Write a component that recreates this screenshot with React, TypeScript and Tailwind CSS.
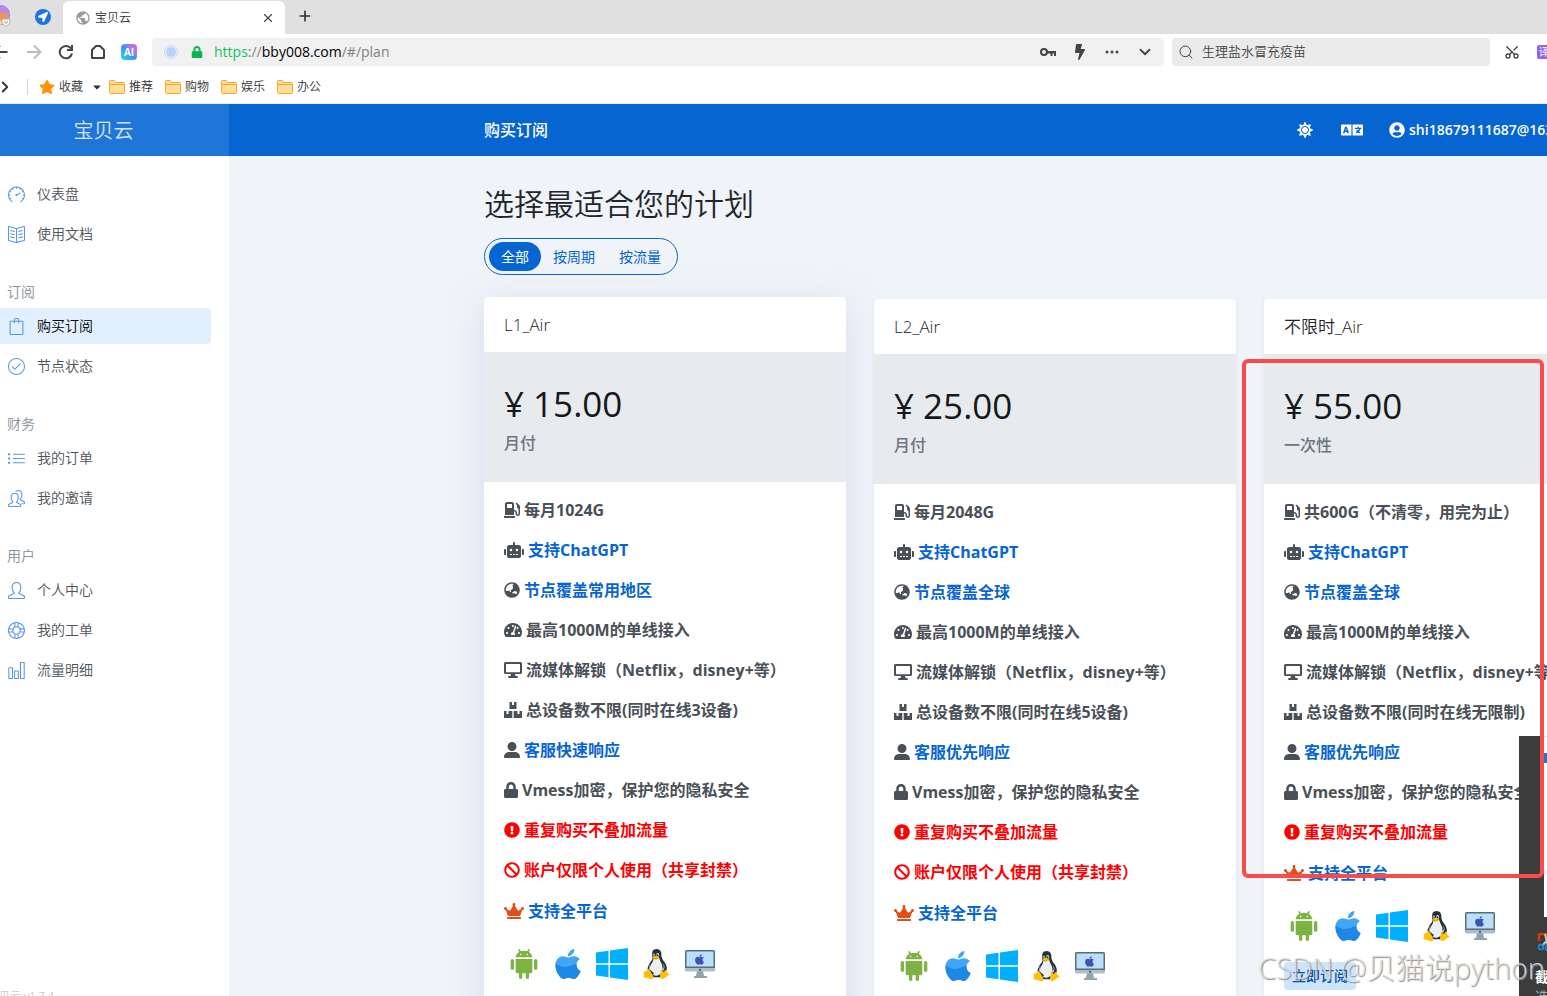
import { useId, useState } from 'react';
import type { ReactNode } from 'react';
import type { IconType } from 'react-icons';
import {
    FaBan,
    FaBolt,
    FaCaretDown,
    FaCrown,
    FaExclamationCircle,
    FaGasPump,
    FaGlobeAsia,
    FaLanguage,
    FaLocationArrow,
    FaLock,
    FaRobot,
    FaStar,
    FaSun,
    FaTachometerAlt,
    FaUserCircle,
} from 'react-icons/fa';
import { FaUserLarge } from 'react-icons/fa6';
import { FcAndroidOs, FcLinux } from 'react-icons/fc';
import { MdPublic } from 'react-icons/md';
import {
    SlBag,
    SlBookOpen,
    SlChart,
    SlCheck,
    SlList,
    SlPeople,
    SlSpeedometer,
    SlSupport,
    SlUser,
} from 'react-icons/sl';
import { ChevronDown, ChevronRight, Plus, Scissors, Search, X } from 'lucide-react';

type Tone = 'dark' | 'link' | 'danger';

interface Feature {
    icon: ReactNode;
    text: string;
    tone?: Tone;
}

interface Plan {
    name: string;
    price: string;
    period: string;
    features: Feature[];
    raised?: boolean;
}

const APPLE_PATH =
    'M318.7 268.7c-.2-36.7 16.4-64.4 50-84.8-18.8-26.9-47.2-41.7-84.7-44.6-35.5-2.8-74.3 20.7-88.5 20.7-15 0-49.4-19.7-76.4-19.7C63.3 141.2 4 184.8 4 273.5q0 39.3 14.4 81.2c12.8 36.7 59 126.7 107.2 125.2 25.2-.6 43-17.9 75.8-17.9 31.8 0 48.3 17.9 76.4 17.9 48.6-.7 90.4-82.5 102.6-119.3-65.2-30.7-61.7-90-61.7-91.9zm-56.6-164.2c27.3-32.4 24.8-61.9 24-72.5-24.1 1.4-52 16.4-67.9 34.9-17.5 19.8-27.8 44.3-25.6 71.9 26.1 2 49.9-11.4 69.5-34.3z';

function AppleLogo() {
    const id = useId();
    return (
        <svg viewBox="0 0 384 448" className="h-[30px] w-[26px]" aria-hidden="true">
            <clipPath id={id}>
                <path d="M0 215C60 240 110 285 190 262S310 205 384 225V448H0z" />
            </clipPath>
            <g transform="translate(0 -32)">
                <path fill="#42a5f5" d={APPLE_PATH} />
            </g>
            <g clipPath={`url(#${id})`}>
                <path fill="#1e88e5" d={APPLE_PATH} transform="translate(0 -32)" />
            </g>
        </svg>
    );
}

function WindowsLogo() {
    return (
        <svg viewBox="0 0 32 32" className="size-8" fill="#00b0ff" aria-hidden="true">
            <path d="M0 4.500 12.500 2.700v12.500H0zM14 2.500 32 0v15.200H14zM0 16.800h12.500v12.500L0 27.500zM14 16.800h18V32l-18-2.500z" />
        </svg>
    );
}

function MacDesktop() {
    return (
        <svg viewBox="0 0 30 29" className="h-[29px] w-[30px]" aria-hidden="true">
            <path fill="#90a4ae" d="M12 21h6l1 5h2.500q.5 0 .5.5V28H9v-1.500q0-.5.5-.5H11z" />
            <path fill="#b0bec5" d="M0 17h30v3q0 1.500-1.500 1.500h-27Q0 21.500 0 20z" />
            <path fill="#546e7a" d="M1.500 0h27Q30 0 30 1.500V18H0V1.500Q0 0 1.500 0z" />
            <path fill="#bbdefb" d="M1.500 1.500h27v15h-27z" />
            <circle cx="15" cy="19.800" r="1" fill="#37474f" />
            <path fill="#3f51b5" d={APPLE_PATH} transform="translate(10 3.500) scale(.0235)" />
        </svg>
    );
}

function DesktopIcon() {
    return (
        <svg viewBox="0 0 18 16" className="h-4 w-[18px]" fill="currentColor" aria-hidden="true">
            <path
                fillRule="evenodd"
                d="M1.500 0h15Q18 0 18 1.500v9q0 1.500-1.500 1.500H11l.5 2H13q.8 0 .8.8V16H4.200v-1.200q0-.8.8-.8h1.500l.5-2H1.500Q0 12 0 10.500v-9Q0 0 1.500 0zM2 2v8.200h14V2z"
            />
        </svg>
    );
}

function BoxesIcon() {
    return (
        <svg viewBox="0 0 18 16" className="h-4 w-[18px]" fill="currentColor" aria-hidden="true">
            <path d="M5.500 0H8v3h2V0h2.500v7h-7zM0 9h2.500v3h2V9h3.800v7H0zM9.700 9h3.800v3h2V9H18v7H9.700z" />
        </svg>
    );
}

const fuel = <FaGasPump className="size-4" />;
const robot = <FaRobot className="size-5" />;
const globe = <FaGlobeAsia className="size-4" />;
const gauge = <FaTachometerAlt className="size-[18px]" />;
const person = <FaUserLarge className="size-4" />;
const lock = <FaLock className="h-4 w-3.5" />;
const warning = <FaExclamationCircle className="size-4" />;
const ban = <FaBan className="size-4" />;
const crown = <FaCrown className="size-5 text-[#e04f1a]" />;

const plans: Plan[] = [
    {
        name: 'L1_Air',
        price: '¥ 15.00',
        period: '月付',
        raised: true,
        features: [
            { icon: fuel, text: '每月1024G' },
            { icon: robot, text: '支持ChatGPT', tone: 'link' },
            { icon: globe, text: '节点覆盖常用地区', tone: 'link' },
            { icon: gauge, text: '最高1000M的单线接入' },
            { icon: <DesktopIcon />, text: '流媒体解锁（Netflix，disney+等）' },
            { icon: <BoxesIcon />, text: '总设备数不限(同时在线3设备)' },
            { icon: person, text: '客服快速响应', tone: 'link' },
            { icon: lock, text: 'Vmess加密，保护您的隐私安全' },
            { icon: warning, text: '重复购买不叠加流量', tone: 'danger' },
            { icon: ban, text: '账户仅限个人使用（共享封禁）', tone: 'danger' },
            { icon: crown, text: '支持全平台', tone: 'link' },
        ],
    },
    {
        name: 'L2_Air',
        price: '¥ 25.00',
        period: '月付',
        features: [
            { icon: fuel, text: '每月2048G' },
            { icon: robot, text: '支持ChatGPT', tone: 'link' },
            { icon: globe, text: '节点覆盖全球', tone: 'link' },
            { icon: gauge, text: '最高1000M的单线接入' },
            { icon: <DesktopIcon />, text: '流媒体解锁（Netflix，disney+等）' },
            { icon: <BoxesIcon />, text: '总设备数不限(同时在线5设备)' },
            { icon: person, text: '客服优先响应', tone: 'link' },
            { icon: lock, text: 'Vmess加密，保护您的隐私安全' },
            { icon: warning, text: '重复购买不叠加流量', tone: 'danger' },
            { icon: ban, text: '账户仅限个人使用（共享封禁）', tone: 'danger' },
            { icon: crown, text: '支持全平台', tone: 'link' },
        ],
    },
    {
        name: '不限时_Air',
        price: '¥ 55.00',
        period: '一次性',
        features: [
            { icon: fuel, text: '共600G（不清零，用完为止）' },
            { icon: robot, text: '支持ChatGPT', tone: 'link' },
            { icon: globe, text: '节点覆盖全球', tone: 'link' },
            { icon: gauge, text: '最高1000M的单线接入' },
            { icon: <DesktopIcon />, text: '流媒体解锁（Netflix，disney+等）' },
            { icon: <BoxesIcon />, text: '总设备数不限(同时在线无限制)' },
            { icon: person, text: '客服优先响应', tone: 'link' },
            { icon: lock, text: 'Vmess加密，保护您的隐私安全' },
            { icon: warning, text: '重复购买不叠加流量', tone: 'danger' },
            { icon: crown, text: '支持全平台', tone: 'link' },
        ],
    },
];

const textTones: Record<Tone, string> = {
    dark: 'text-[#495057]',
    link: 'text-[#0665d0]',
    danger: 'text-[#ff0000]',
};

const iconTones: Record<Tone, string> = {
    dark: 'text-[#495057]',
    link: 'text-[#495057]',
    danger: 'text-[#ff0000]',
};

function PlanCard({ plan }: { plan: Plan }) {
    return (
        <article
            className={
                plan.raised
                    ? 'w-[362px] shrink-0 -translate-y-0.5 rounded-sm bg-white shadow-[0_8px_32px_rgba(190,200,232,0.55)]'
                    : 'w-[362px] shrink-0 rounded-sm bg-white shadow-[0_1px_3px_rgba(200,208,235,0.5)]'
            }
        >
            <h2 className="flex h-[55px] items-center px-5 text-[17px] font-[350] text-[#212529]">{plan.name}</h2>
            <div className="h-[130px] bg-[#e8ebee] px-5 pt-7">
                <div className="text-[35px] leading-12 font-medium text-[#16181a]">{plan.price}</div>
                <div className="mt-[3px] text-base leading-6 font-medium text-[#6c757d]">{plan.period}</div>
            </div>
            <div className="px-5 pt-4 pb-6">
                <ul className="flex flex-col gap-4">
                    {plan.features.map((feature) => (
                        <li
                            key={feature.text}
                            className="flex h-6 items-center gap-1 text-base leading-6 font-bold whitespace-nowrap last:h-[26px]"
                        >
                            <span className={iconTones[feature.tone ?? 'dark']}>{feature.icon}</span>
                            <span className={textTones[feature.tone ?? 'dark']}>{feature.text}</span>
                        </li>
                    ))}
                </ul>
                <div className="mt-5 flex h-10 items-center gap-1">
                    <span className="flex w-10 justify-center"><FcAndroidOs className="size-10" /></span>
                    <span className="flex w-10 justify-center"><AppleLogo /></span>
                    <span className="flex w-10 justify-center"><WindowsLogo /></span>
                    <span className="flex w-10 justify-center"><FcLinux className="size-10" /></span>
                    <span className="flex w-10 justify-center"><MacDesktop /></span>
                </div>
                <button
                    type="button"
                    className="mt-4 h-7 rounded-sm bg-[#cde4fe] px-2 text-sm font-medium text-[#054d9e]"
                >
                    立即订阅
                </button>
            </div>
        </article>
    );
}

interface NavEntry {
    label: string;
    icon: IconType;
    active?: boolean;
}

const navGroups: { title?: string; items: NavEntry[] }[] = [
    {
        items: [
            { label: '仪表盘', icon: SlSpeedometer },
            { label: '使用文档', icon: SlBookOpen },
        ],
    },
    {
        title: '订阅',
        items: [
            { label: '购买订阅', icon: SlBag, active: true },
            { label: '节点状态', icon: SlCheck },
        ],
    },
    {
        title: '财务',
        items: [
            { label: '我的订单', icon: SlList },
            { label: '我的邀请', icon: SlPeople },
        ],
    },
    {
        title: '用户',
        items: [
            { label: '个人中心', icon: SlUser },
            { label: '我的工单', icon: SlSupport },
            { label: '流量明细', icon: SlChart },
        ],
    },
];

function Sidebar() {
    return (
        <aside className="flex w-[229px] shrink-0 flex-col overflow-hidden bg-white">
            <div className="flex h-13 shrink-0 items-center justify-center bg-[#1f75d8] pt-0.5 pr-[22px] text-xl font-[350] text-white/80">
                宝贝云
            </div>
            <nav className="pt-5 pr-[18px]">
                {navGroups.map((group, i) => (
                    <div key={i}>
                        {group.title && (
                            <div className="h-13 pt-[26px] pl-[7px] text-sm leading-5 font-[350] text-[#869099]">
                                {group.title}
                            </div>
                        )}
                        {group.items.map(({ label, icon: Icon, active }) => (
                            <a
                                key={label}
                                href="#/"
                                className={
                                    active
                                        ? 'mb-1 flex h-9 items-center gap-3 rounded-r-sm bg-[#e1effe] pl-2 text-sm font-[350] text-black'
                                        : 'mb-1 flex h-9 items-center gap-3 pl-2 text-sm font-[350] text-[#4d535c]'
                                }
                            >
                                <Icon className="size-[17px] text-[#5598e6]" />
                                {label}
                            </a>
                        ))}
                    </div>
                ))}
            </nav>
            <div className="mt-auto -mb-2 -ml-3 shrink-0 self-start text-[11px] leading-4 text-[#c9cccf]">宝贝云 v1.7.4</div>
        </aside>
    );
}

function FolderIcon() {
    return (
        <svg viewBox="0 0 16 14" className="h-3.5 w-4" aria-hidden="true">
            <path d="M.5 12.500V1.500q0-1 1-1h3.800l1.200 2h8q1 0 1 1v9q0 1-1 1h-13q-1 0-1-1z" fill="#ffdf99" stroke="#f5a623" />
            <path d="M1 4.500h14" stroke="#f5a623" />
        </svg>
    );
}

const toolButton = 'flex shrink-0 items-center justify-center text-[#444]';

function BrowserChrome() {
    return (
        <header className="shrink-0 overflow-hidden border-b border-[#ececec] bg-white font-[350] text-[#333]">
            <div className="flex h-[34px] items-end bg-[#e0e0e0]">
                <button type="button" aria-label="账号" className="mb-1.5 -ml-3 size-6 shrink-0">
                    <svg viewBox="0 0 24 24" className="size-6">
                        <circle cx="12" cy="11" r="11" fill="#b68ae6" stroke="#f4f1f8" />
                        <path d="M4 18c1-8 6-9 9-10l3 2 3-2 1 6-4 5z" fill="#f0964a" />
                        <path d="M6 18q6-4 10 1-5 4-10-1z" fill="#fbe08a" />
                        <path d="M14 15h8v4l-4 3.500-4-3.500z" fill="#fff" stroke="#aaa" />
                        <path d="m16 17 2 2.500 2-2.500" fill="none" stroke="#999" />
                    </svg>
                </button>
                <button type="button" aria-label="导航" className="mb-[9px] ml-[23px] flex size-4 shrink-0 items-center justify-center rounded-full bg-[#1a73e8] text-white">
                    <FaLocationArrow className="size-2.5" />
                </button>
                <div className="ml-3 flex h-[33px] w-[222px] shrink-0 items-center rounded-t-md bg-white pr-2.5 pl-3">
                    <MdPublic className="size-4 text-[#9a9a9a]" />
                    <span className="ml-1 text-xs">宝贝云</span>
                    <button type="button" aria-label="关闭标签页" className="ml-auto text-[#444]">
                        <X className="size-3.5" />
                    </button>
                </div>
                <button type="button" aria-label="新标签页" className="mb-0.5 ml-3 h-8 text-[#333]">
                    <Plus className="size-4" strokeWidth={2.500} />
                </button>
            </div>
            <div className="flex h-9 items-center">
                <button type="button" aria-label="后退" className={`${toolButton} -ml-2`}>
                    <svg viewBox="0 0 16 16" className="size-4" fill="none" stroke="currentColor" strokeWidth="2">
                        <path d="M15.500 8H2M8 1.500 1.500 8 8 14.500" />
                    </svg>
                </button>
                <button type="button" aria-label="前进" className="ml-[18px] shrink-0 text-[#bbb]">
                    <svg viewBox="0 0 16 16" className="size-4" fill="none" stroke="currentColor" strokeWidth="2">
                        <path d="M1 8h13M8 1.500 14.500 8 8 14.500" />
                    </svg>
                </button>
                <button type="button" aria-label="刷新" className={`${toolButton} ml-4`}>
                    <svg viewBox="0 0 16 16" className="size-4" fill="none" stroke="currentColor" strokeWidth="2">
                        <path d="M14 9.500A6.200 6.200 0 1 1 13 4.500M14 1v5H9" />
                    </svg>
                </button>
                <button type="button" aria-label="主页" className={`${toolButton} ml-4`}>
                    <svg viewBox="0 0 16 16" className="size-4" fill="none" stroke="currentColor" strokeWidth="2">
                        <path d="M2 14V6L6 2h4l4 4v8z" strokeLinejoin="round" />
                    </svg>
                </button>
                <button
                    type="button"
                    className="ml-[15px] flex size-4 shrink-0 items-center justify-center rounded-sm bg-linear-to-bl from-[#ff3fb4] via-[#3f8cff] to-[#12e0e0] text-[10px] leading-4 font-bold text-white"
                >
                    AI
                </button>
                <div className="ml-[15px] flex h-7 min-w-0 flex-1 items-center rounded-sm bg-[#f1f1f1] px-3">
                    <span className="flex size-3.5 shrink-0 items-center justify-center rounded-full border border-[#c3d7fb]">
                        <span className="size-2.5 rounded-full bg-[#b9d1fb]" />
                    </span>
                    <FaLock className="ml-3 h-3 w-3.5 shrink-0 text-[#0ab44f]" />
                    <span className="ml-2.5 flex-1 text-sm font-normal text-[#808080]">
                        <span className="text-[#12c15c]">https</span>://<span className="text-black">bby008.com</span>/#/plan
                    </span>
                    <button type="button" aria-label="密码" className={toolButton}>
                        <svg viewBox="0 0 16 10" className="h-2.5 w-4">
                            <circle cx="4" cy="5" r="3" fill="none" stroke="currentColor" strokeWidth="2" />
                            <path d="M7 4h9v5h-2V6.500h-1.500V9h-2V6.500H7z" fill="currentColor" />
                        </svg>
                    </button>
                    <button type="button" aria-label="加速" className={`${toolButton} ml-4`}>
                        <FaBolt className="size-4" />
                    </button>
                    <button type="button" aria-label="更多" className={`${toolButton} ml-4`}>
                        <svg viewBox="0 0 16 4" className="h-1 w-4" fill="currentColor">
                            <circle cx="3" cy="2" r="1.500" />
                            <circle cx="8" cy="2" r="1.500" />
                            <circle cx="13" cy="2" r="1.500" />
                        </svg>
                    </button>
                    <button type="button" aria-label="展开" className={`${toolButton} -mr-0.5 ml-4`}>
                        <ChevronDown className="size-[18px]" strokeWidth={2.500} />
                    </button>
                </div>
                <label className="ml-2 flex h-7 w-[318px] shrink-0 items-center gap-2 rounded-sm bg-[#ebebeb] px-1.5">
                    <Search className="size-4 text-[#444]" strokeWidth={1.500} />
                    <input
                        type="text"
                        aria-label="搜索"
                        defaultValue="生理盐水冒充疫苗"
                        className="min-w-0 flex-1 bg-transparent text-[13px] text-[#444] outline-none"
                    />
                </label>
                <button type="button" aria-label="截图" className={`${toolButton} ml-3.5`}>
                    <Scissors className="size-4 -rotate-90" strokeWidth={2} />
                </button>
                <button
                    type="button"
                    className="-mr-1 ml-[17px] size-3.5 shrink-0 overflow-hidden rounded-xs bg-[#8f63f5] text-[11px] leading-3.5 text-white"
                >
                    译
                </button>
            </div>
            <div className="flex h-[33px] items-center text-xs">
                <ChevronRight className="-ml-1 size-[18px] text-[#333]" strokeWidth={2.500} />
                <span className="ml-[13px] h-4 w-px bg-[#d5d5d5]" />
                <FaStar className="ml-[11px] size-4 text-[#ff9500]" />
                <span className="ml-1">收藏</span>
                <FaCaretDown className="mr-1.5 ml-2 size-3" />
                {['推荐', '购物', '娱乐', '办公'].map((name) => (
                    <a key={name} href="#/" className="mr-3 flex items-center gap-1">
                        <FolderIcon />
                        {name}
                    </a>
                ))}
            </div>
        </header>
    );
}

function CaptureNotice() {
    return (
        <div className="absolute right-0 bottom-0 flex h-[260px] w-7 flex-col overflow-hidden bg-[#3c3c3c]">
            <div className="ml-[25px] h-[181px] w-40 shrink-0 border-t border-[#ddd] bg-white">
                <div className="mt-4 h-2.5 bg-[#1f75d8]" />
            </div>
            <svg viewBox="0 0 18 18" className="mt-4 ml-[18px] size-[18px] shrink-0" fill="none">
                <path d="M2 8V1h8v8" stroke="#d83b01" strokeWidth="2.500" />
                <path d="m8 1 3 12M14 3 5 13" stroke="#ccc" strokeWidth="2" />
                <circle cx="4" cy="14" r="2.500" stroke="#1f8ae0" strokeWidth="1.500" />
                <circle cx="11" cy="15" r="2.500" stroke="#1f8ae0" strokeWidth="1.500" />
            </svg>
            <span className="mt-4 ml-4 text-sm leading-5 font-bold whitespace-nowrap text-white">截图</span>
            <span className="ml-4 text-sm leading-5 whitespace-nowrap text-[#aaa]">选择</span>
        </div>
    );
}

export default function App() {
    const filters = ['全部', '按周期', '按流量'];
    const [filter, setFilter] = useState('全部');

    return (
        <div className="relative flex h-screen flex-col overflow-hidden bg-[#f0f3f8] font-['Open_Sans','Noto_Sans_CJK_SC',sans-serif]">
            <BrowserChrome />
            <div className="flex min-h-0 flex-1">
                <Sidebar />
                <div className="flex min-w-0 flex-1 flex-col overflow-hidden">
                    <div className="flex h-13 shrink-0 items-center bg-[#0665d0] pl-[255px] text-white">
                        <h3 className="shrink-0 text-base font-medium">购买订阅</h3>
                        <div className="min-w-[749px]" />
                        <button type="button" aria-label="主题" className="shrink-0">
                            <FaSun className="size-4" />
                        </button>
                        <button type="button" aria-label="语言" className="ml-7 shrink-0">
                            <FaLanguage className="size-[22px]" />
                        </button>
                        <button type="button" className="ml-[26px] flex shrink-0 items-center gap-1 text-sm font-semibold">
                            <FaUserCircle className="size-4" />
                            shi18679111687@163.com
                        </button>
                    </div>
                    <main className="pl-[255px]">
                        <h1 className="pt-[27px] text-3xl leading-[42px] font-[350] text-[#212529]">选择最适合您的计划</h1>
                        <div className="mt-[13px] inline-flex h-[37px] items-center rounded-full border border-[#0665d0] px-1">
                            {filters.map((name) => (
                                <button
                                    key={name}
                                    type="button"
                                    onClick={() => setFilter(name)}
                                    className={
                                        filter === name
                                            ? 'h-[29px] rounded-full bg-[#0665d0] px-3 text-sm font-normal text-white'
                                            : 'h-[29px] rounded-full px-3 text-sm font-normal text-[#0665d0]'
                                    }
                                >
                                    {name}
                                </button>
                            ))}
                        </div>
                        <div className="mt-6 flex items-start gap-7">
                            {plans.map((plan) => (
                                <PlanCard key={plan.name} plan={plan} />
                            ))}
                        </div>
                    </main>
                </div>
            </div>

            {/* Screenshot annotations */}
            <CaptureNotice />
            <div className="pointer-events-none absolute right-[3px] bottom-[118px] h-[519px] w-[302px] rounded-md border-4 border-[#f94b49]" />
            <div className="pointer-events-none absolute right-0.5 bottom-2 text-[29px] leading-10 font-light whitespace-nowrap text-[#e2e2e2]/85 [text-shadow:1px_1px_1px_#8a8a8a]">
                CSDN @贝猫说python
            </div>
        </div>
    );
}
